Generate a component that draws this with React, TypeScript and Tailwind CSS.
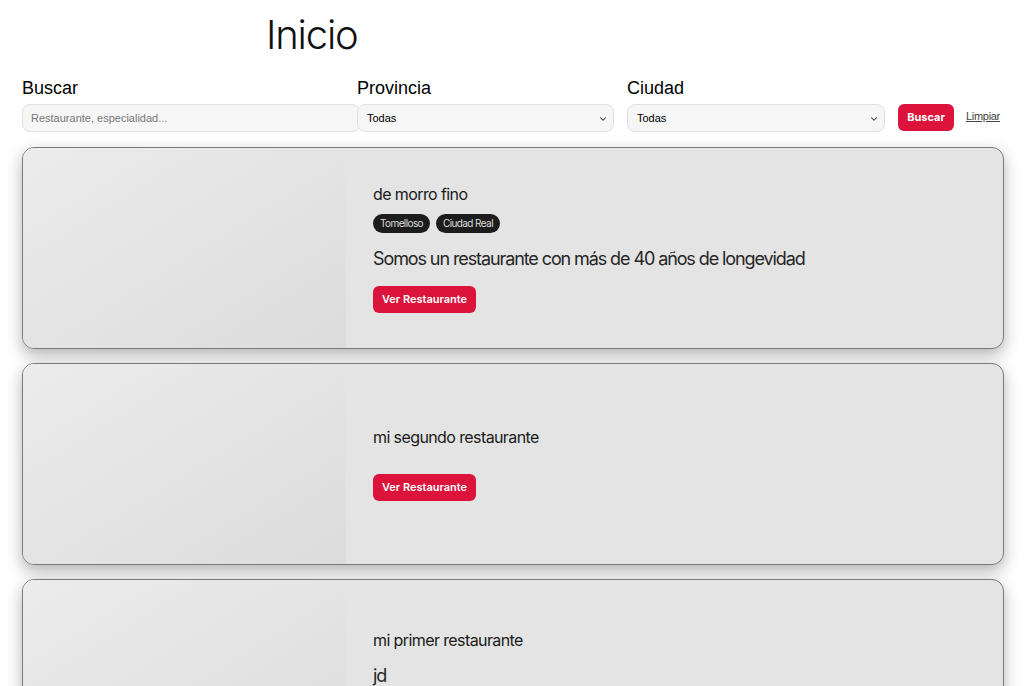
import { ChevronDown } from "lucide-react";

type Restaurant = {
  id: string;
  name: string;
  tags: string[];
  description?: string;
};

const restaurants: Restaurant[] = [
  {
    id: "1",
    name: "de morro fino",
    tags: ["Tomelloso", "Ciudad Real"],
    description: "Somos un restaurante con más de 40 años de longevidad",
  },
  { id: "2", name: "mi segundo restaurante", tags: [] },
  { id: "3", name: "mi primer restaurante", tags: [], description: "jd" },
];

const sans = { fontFamily: '"Liberation Sans", Arial, sans-serif' };
const body = { fontFamily: 'Inter, "Noto Sans", sans-serif' };

function Select({ width }: { width: string }) {
  return (
    <div className={`relative ${width}`}>
      <select
        className="h-[28px] w-full appearance-none rounded-lg border border-[#e0e0e0] bg-[#f6f6f6] pl-[9px] text-[11px] text-black outline-none"
        style={sans}
        defaultValue="Todas"
      >
        <option>Todas</option>
      </select>
      <ChevronDown
        className="pointer-events-none absolute right-[6px] top-[10px] h-[10px] w-[10px] text-[#333]"
        strokeWidth={2.5}
      />
    </div>
  );
}

function Card({ r }: { r: Restaurant }) {
  return (
    <div className="flex h-[202px] overflow-hidden rounded-xl border border-[#7a7a7a] bg-[#e4e4e4] shadow-[0_6px_16px_rgba(0,0,0,0.3)]">
      {/* imagen (vacía) */}
      <div className="w-[323px] shrink-0 bg-gradient-to-br from-[#ececec] to-[#dcdcdc]" />
      <div className="flex flex-col justify-center pl-[27px]" style={body}>
        <h3 className="text-[16px] leading-[20px] tracking-[-0.6px] text-[#1a1a1a]">
          {r.name}
        </h3>
        {r.tags.length > 0 ? (
          <div className="mt-[10px] flex gap-[6px]">
            {r.tags.map((t) => (
              <span
                key={t}
                className="flex h-[19px] items-center rounded-full bg-[#1c1c1c] px-[7px] text-[10px] tracking-[-0.6px] text-[#dcdcdc]"
              >
                {t}
              </span>
            ))}
          </div>
        ) : null}
        {r.description ? (
          <p className="mt-[15px] text-[18px] leading-[22px] tracking-[-1.1px] text-[#262626]">
            {r.description}
          </p>
        ) : null}
        <button
          className={`${
            r.description ? "mt-[16px]" : "mt-[27px]"
          } h-[27px] w-[103px] rounded-md bg-[#dc143c] text-[11px] font-semibold text-white`}
        >
          Ver Restaurante
        </button>
      </div>
    </div>
  );
}

export default function App() {
  return (
    <div className="min-h-screen bg-white pb-10 pl-[22px] pr-[20px] text-black">
      <h1
        className="pl-[244px] pt-[11px] text-[40px] font-light leading-[48px] tracking-[-1.2px] text-[#111]"
        style={body}
      >
        Inicio
      </h1>

      {/* filtros */}
      <div className="mt-[18px] flex items-end" style={sans}>
        <div className="flex w-[335px] flex-col">
          <label className="mb-[5px] text-[18px] font-medium leading-[22px]">Buscar</label>
          <input
            placeholder="Restaurante, especialidad..."
            className="h-[28px] w-[338px] rounded-lg border border-[#e0e0e0] bg-[#f6f6f6] px-[8px] text-[11px] outline-none placeholder:text-[#777]"
          />
        </div>
        <div className="flex w-[270px] flex-col">
          <label className="mb-[5px] text-[18px] font-medium leading-[22px]">Provincia</label>
          <Select width="w-[257px]" />
        </div>
        <div className="flex w-[271px] flex-col">
          <label className="mb-[5px] text-[18px] font-medium leading-[22px]">Ciudad</label>
          <Select width="w-[258px]" />
        </div>
        <button
          className="mb-[1px] h-[27px] w-[56px] rounded-md bg-[#dc143c] text-[11px] font-bold text-white"
          style={body}
        >
          Buscar
        </button>
        <a className="mb-[8px] ml-[12px] text-[11px] tracking-[-0.3px] text-[#444] underline">
          Limpiar
        </a>
      </div>

      {/* listado */}
      <div className="mt-[15px] flex flex-col gap-[14px]">
        {restaurants.map((r) => (
          <Card key={r.id} r={r} />
        ))}
      </div>
    </div>
  );
}
